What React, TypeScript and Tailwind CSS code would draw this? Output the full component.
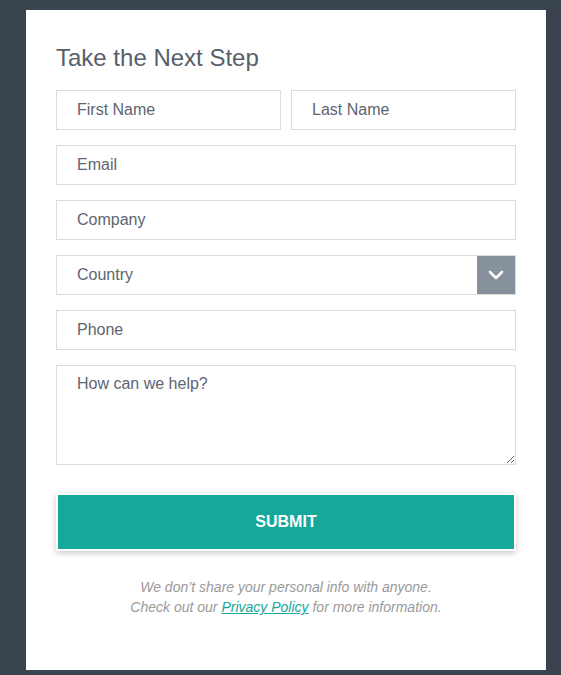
const field =
    'h-10 w-full border border-[#dcdcdc] bg-white pl-[20px] pr-3 text-[16px] text-[#555d68] placeholder:text-[#5d6570] outline-none'

function App() {
    return (
        <div className="min-h-[675px] w-full bg-[#39444e] pt-[10px] font-['Liberation_Sans',Arial,sans-serif]">
            <div className="ml-[26px] h-[660px] w-[520px] bg-white px-[30px] pt-[33px]">
                <h1 className="mb-[18px] text-[24px] leading-[29px] text-[#56606c]">Take the Next Step</h1>

                <form className="flex flex-col gap-[15px]" onSubmit={(e) => e.preventDefault()}>
                    <div className="flex gap-[10px]">
                        <input className={field} placeholder="First Name" />
                        <input className={field} placeholder="Last Name" />
                    </div>
                    <input className={field} placeholder="Email" />
                    <input className={field} placeholder="Company" />

                    {/* fake select */}
                    <div className="flex h-10 w-full items-stretch border border-[#dcdcdc] bg-white">
                        <div className="flex flex-1 items-center pl-[20px] text-[16px] text-[#5d6570]">Country</div>
                        <div className="flex w-[38px] items-center justify-center bg-[#87919b]">
                            <svg width="16" height="10" viewBox="0 0 16 10" fill="none">
                                <polyline points="2,2 8,8 14,2" stroke="white" strokeWidth="2.6" strokeLinecap="round" strokeLinejoin="round" />
                            </svg>
                        </div>
                    </div>

                    <input className={field} placeholder="Phone" />
                    <textarea
                        className="h-[100px] w-full border border-[#dcdcdc] bg-white px-[20px] pt-[8px] text-[16px] leading-[20px] text-[#555d68] placeholder:text-[#5d6570] outline-none"
                        placeholder="How can we help?"
                    />

                    <button
                        type="submit"
                        className="mt-[13px] h-[58px] w-full border-2 border-white bg-[#17a89b] text-[16px] font-bold text-white shadow-[0_2px_6px_rgba(0,0,0,0.22)]"
                    >
                        SUBMIT
                    </button>
                </form>

                <p className="mt-[26px] text-center text-[14px] italic leading-[20px] text-[#9a9a9a]">
                    We don’t share your personal info with anyone.
                    <br />
                    Check out our <a href="#" className="text-[#17a89b] underline">Privacy Policy</a> for more information.
                </p>
            </div>
        </div>
    )
}

export default App
